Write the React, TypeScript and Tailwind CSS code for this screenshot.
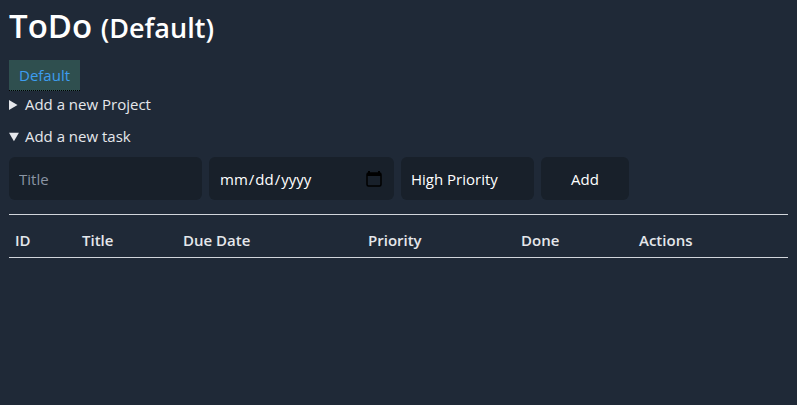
import React, { useState } from 'react';

const CalendarIcon: React.FC = () => (
    <svg width="16" height="17" viewBox="0 0 16 17" className="pointer-events-none absolute right-[12px] top-[13px]">
        <rect x="2" y="1" width="2" height="3" fill="#000" />
        <rect x="12" y="1" width="2" height="3" fill="#000" />
        <rect x="1" y="3" width="14" height="13" rx="1.5" fill="none" stroke="#000" strokeWidth="1.5" />
        <rect x="1" y="3" width="14" height="3" fill="#000" />
    </svg>
);

const App: React.FC = () => {
    const [title, setTitle] = useState('');

    return (
        <div className="min-h-[405px] bg-[#1f2937] px-[9px] pt-[6px] text-white" style={{ fontFamily: '"Open Sans", "Noto Sans", sans-serif' }}>
            <h1 className="text-[33px] font-semibold leading-[40px]">
                ToDo <span className="text-[27px]">(Default)</span>
            </h1>
            <div className="mt-[12px] flex">
                <button className="h-[31px] border-b border-dotted border-black bg-[#2f4f4f] px-[10px] text-[15px] text-[#3d9df0]">
                    Default
                </button>
            </div>
            <details className="text-[15px] leading-[26px] text-[#e5e7eb]">
                <summary className="cursor-pointer">Add a new Project</summary>
            </details>
            <details open className="mt-[6px] text-[15px] leading-[26px] text-[#e5e7eb]">
                <summary className="cursor-pointer">Add a new task</summary>
                <div className="mt-[8px] flex gap-[7px]">
                    <input
                        type="text"
                        placeholder="Title"
                        value={title}
                        onChange={(e) => setTitle(e.target.value)}
                        className="h-[43px] w-[193px] rounded-md bg-[#18202a] px-[10px] text-[15px] text-white outline-none placeholder:text-[#8a94a3]"
                    />
                    <div className="relative">
                        <input
                            type="date"
                            className="h-[43px] w-[185px] min-w-0 rounded-md bg-[#18202a] px-[10px] text-[15px] text-white outline-none [&::-webkit-calendar-picker-indicator]:opacity-0"
                        />
                        <CalendarIcon />
                    </div>
                    <select className="h-[43px] w-[133px] appearance-none rounded-md bg-[#18202a] px-[10px] text-[15px] text-white outline-none">
                        <option>High Priority</option>
                        <option>Medium Priority</option>
                        <option>Low Priority</option>
                    </select>
                    <button className="h-[43px] w-[88px] rounded-md bg-[#18202a] text-[15px] text-white">Add</button>
                </div>
            </details>
            <hr className="mt-[14px] border-t border-[#d1d5db]" />
            <table className="mt-[9px] w-full border-collapse text-left">
                <thead>
                    <tr className="border-b border-[#d1d5db] text-[15px] font-semibold text-[#e5e7eb]">
                        <th className="w-[67px] py-[5px] pl-[6px] font-semibold">ID</th>
                        <th className="w-[101px] py-[5px] pl-[6px] font-semibold">Title</th>
                        <th className="w-[185px] py-[5px] pl-[6px] font-semibold">Due Date</th>
                        <th className="w-[153px] py-[5px] pl-[6px] font-semibold">Priority</th>
                        <th className="w-[118px] py-[5px] pl-[6px] font-semibold">Done</th>
                        <th className="py-[5px] pl-[6px] font-semibold">Actions</th>
                    </tr>
                </thead>
                <tbody></tbody>
            </table>
        </div>
    );
};

export default App;
